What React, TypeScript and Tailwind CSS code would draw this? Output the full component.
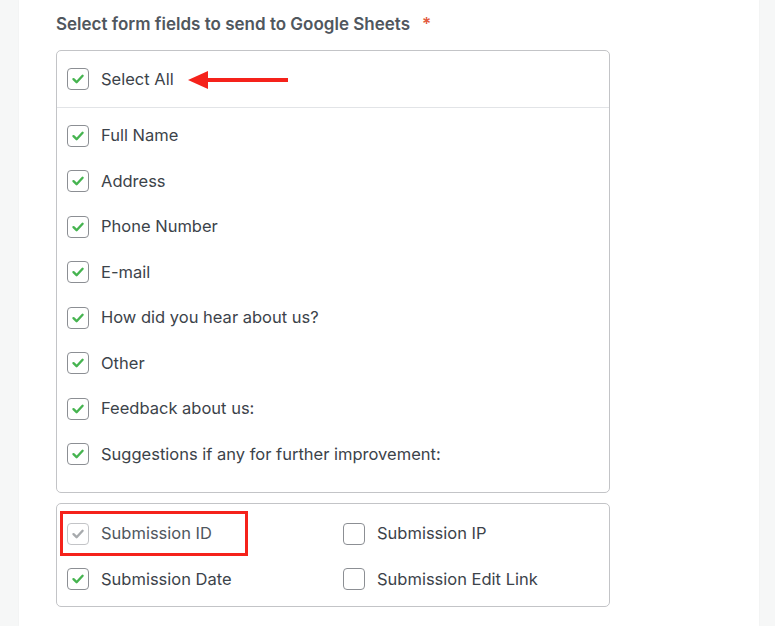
import React from "react";

type Field = { label: string; checked: boolean; disabled?: boolean };

const formFields = [
  "Full Name",
  "Address",
  "Phone Number",
  "E-mail",
  "How did you hear about us?",
  "Other",
  "Feedback about us:",
  "Suggestions if any for further improvement:",
];

const metaFields: Field[] = [
  { label: "Submission ID", checked: true, disabled: true },
  { label: "Submission IP", checked: false },
  { label: "Submission Date", checked: true },
  { label: "Submission Edit Link", checked: false },
];

function Checkbox({ checked, disabled }: { checked: boolean; disabled?: boolean }) {
  return (
    <span
      className={`flex h-[22px] w-[22px] shrink-0 items-center justify-center rounded-[4px] border bg-white ${
        disabled ? "border-[#c3c4c7]" : "border-[#8c8f94]"
      }`}
    >
      {checked ? (
        <svg width="14" height="14" viewBox="0 0 14 14" fill="none">
          <path
            d="M2.5 7.2 L5.6 10.2 L11.6 3.8"
            stroke={disabled ? "#a7aaad" : "#46b450"}
            strokeWidth="2.4"
            strokeLinecap="round"
            strokeLinejoin="round"
          />
        </svg>
      ) : null}
    </span>
  );
}

function Row({ label, checked, disabled }: Field) {
  return (
    <label className="flex h-[45.5px] items-center gap-3">
      <Checkbox checked={checked} disabled={disabled} />
      <span className={`text-[16.5px] ${disabled ? "text-[#50575e]" : "text-[#3c434a]"}`}>{label}</span>
    </label>
  );
}

export default function App() {
  return (
    <div
      className="min-h-[626px] w-full bg-[#f6f7f7] px-[19px] pr-[16px]"
      style={{ fontFamily: 'Inter, "Liberation Sans", Arial, sans-serif' }}
    >
      <div className="relative min-h-[626px] bg-white pl-[37px] pt-[13px] shadow-[0_0_2px_rgba(0,0,0,0.04)]">
        <h2 className="flex h-[24px] items-center gap-3 text-[17px] font-semibold text-[#50575e]">
          Select form fields to send to Google Sheets
          <span className="text-[#e35b3f]">*</span>
        </h2>

        <div className="mt-[13px] w-[554px] rounded-[5px] border border-[#c3c4c7]">
          <div className="relative flex h-[57px] items-center gap-3 border-b border-[#e2e4e7] px-[10px]">
            <Checkbox checked />
            <span className="text-[16.5px] text-[#3c434a]">Select All</span>
            <svg className="absolute left-[131px] top-[19px]" width="100" height="20" viewBox="0 0 100 20">
              <polygon points="0,10 20,1 20,19" fill="#f5221b" />
              <rect x="16" y="8" width="84" height="4" fill="#f5221b" />
            </svg>
          </div>
          <div className="px-[10px] pb-[15px] pt-[5px]">
            {formFields.map((f) => (
              <Row key={f} label={f} checked />
            ))}
          </div>
        </div>

        <div className="relative mt-[10px] w-[554px] rounded-[5px] border border-[#c3c4c7] px-[10px] pb-[4px] pt-[7px]">
          <div className="grid grid-cols-[276px_1fr]">
            {metaFields.map((f) => (
              <Row key={f.label} {...f} />
            ))}
          </div>
          <div className="pointer-events-none absolute left-[3px] top-[7px] h-[45px] w-[188px] border-[3px] border-[#f5221b]" />
        </div>
      </div>
    </div>
  );
}
